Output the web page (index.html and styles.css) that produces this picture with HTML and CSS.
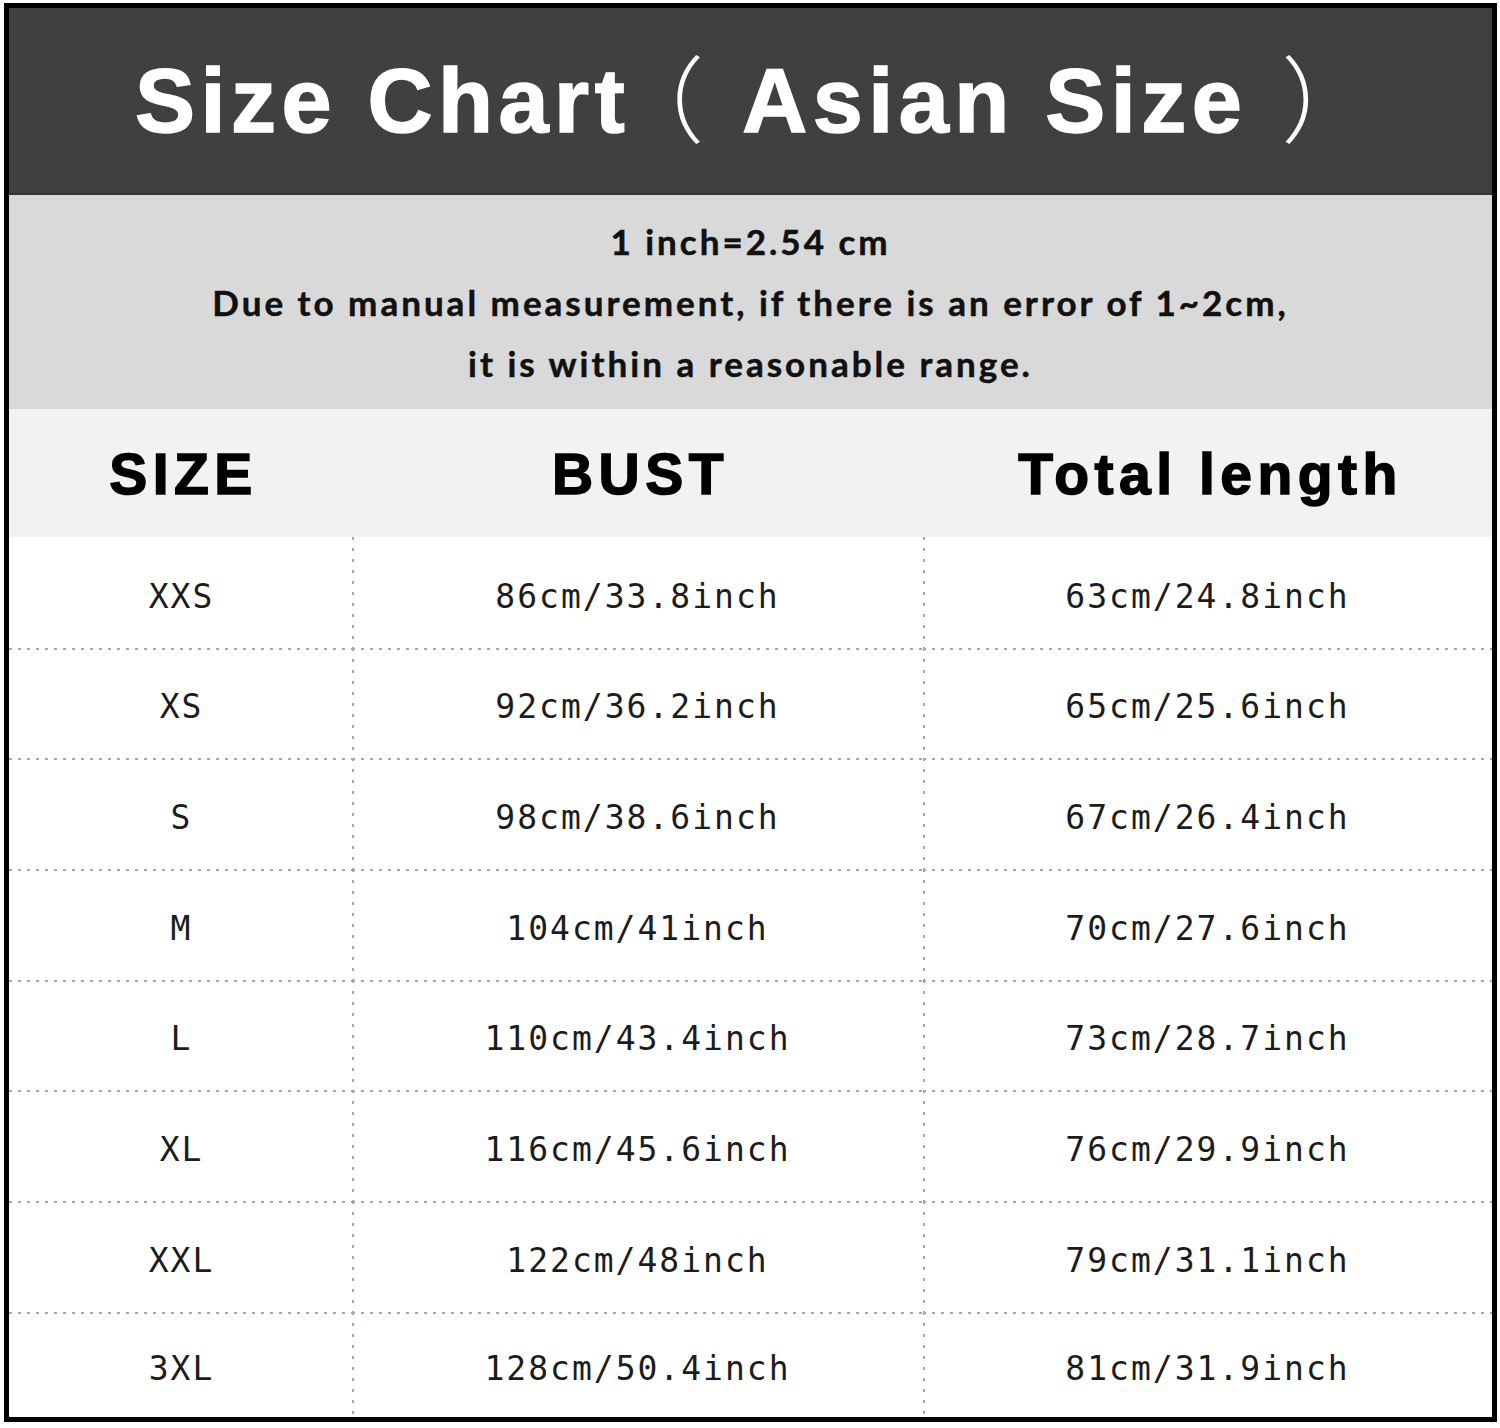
FILE: index.html
```html
<!DOCTYPE html>
<html>
<head>
<meta charset="utf-8">
<link rel="stylesheet" href="styles.css">
</head>
<body>
<div class="frame">
  <div class="title"><span class="t">Size Chart</span><span class="p">（</span><span class="t">Asian Size</span><span class="p pr">）</span></div>
  <div class="note">
    <p>1 inch=2.54 cm</p>
    <p>Due to manual measurement, if there is an error of 1~2cm,</p>
    <p>it is within a reasonable range.</p>
  </div>
  <div class="table">
    <div class="hd">SIZE</div><div class="hd">BUST</div><div class="hd">Total length</div>
    <div class="c c1">XXS</div><div class="c c2">86cm/33.8inch</div><div class="c c3">63cm/24.8inch</div>
    <div class="c c1 r">XS</div><div class="c c2 r">92cm/36.2inch</div><div class="c c3 r">65cm/25.6inch</div>
    <div class="c c1 r">S</div><div class="c c2 r">98cm/38.6inch</div><div class="c c3 r">67cm/26.4inch</div>
    <div class="c c1 r">M</div><div class="c c2 r">104cm/41inch</div><div class="c c3 r">70cm/27.6inch</div>
    <div class="c c1 r">L</div><div class="c c2 r">110cm/43.4inch</div><div class="c c3 r">73cm/28.7inch</div>
    <div class="c c1 r">XL</div><div class="c c2 r">116cm/45.6inch</div><div class="c c3 r">76cm/29.9inch</div>
    <div class="c c1 r">XXL</div><div class="c c2 r">122cm/48inch</div><div class="c c3 r">79cm/31.1inch</div>
    <div class="c c1 r">3XL</div><div class="c c2 r">128cm/50.4inch</div><div class="c c3 r">81cm/31.9inch</div>
  </div>
</div>
</body>
</html>
```

FILE: styles.css
```css
* { box-sizing: border-box; }
html, body { margin: 0; padding: 0; background: #ffffff; }
body { width: 1500px; height: 1428px; overflow: hidden; }

.frame {
  margin: 3px 0 0 4px;
  width: 1493px;
  height: 1419px;
  border: 5px solid #000;
  background: #fff;
  display: flex;
  flex-direction: column;
  overflow: hidden;
}

.title {
  height: 187px;
  background: #404040;
  border-bottom: 2px solid #353535;
  display: flex;
  align-items: center;
  justify-content: flex-start;
  padding-left: 126px;
  color: #fff;
  font-family: "Liberation Sans", Arial, sans-serif;
  font-weight: 700;
  font-size: 90px;
  line-height: 1;
}
.title .t {
  letter-spacing: 5.5px;
  -webkit-text-stroke: 1.5px #fff;
}
.title .p {
  font-family: "Noto Sans CJK SC", sans-serif;
  font-feature-settings: "halt" 1;
  font-weight: 300;
  font-size: 94px;
  margin: 0 38px 12px 27px;
}
.title .pr { margin: 0 0 12px 34px; }

.note {
  height: 214px;
  background: #d9d9d9;
  display: flex;
  flex-direction: column;
  justify-content: center;
  align-items: center;
  font-family: Lato, "Open Sans", sans-serif;
  font-weight: 700;
  font-size: 35px;
  letter-spacing: 3px;
  color: #111;
}
.note p {
  margin: 0;
  line-height: 61px;
  -webkit-text-stroke: 0.5px #111;
}

.table {
  flex: 1;
  display: grid;
  grid-template-columns: 343px 571px 1fr;
  grid-template-rows: 128px repeat(7, 110.67px) 1fr;
}

.hd {
  background: #f2f2f2;
  display: flex;
  align-items: center;
  justify-content: center;
  font-family: "Liberation Sans", Arial, sans-serif;
  font-weight: 700;
  font-size: 57px;
  letter-spacing: 5.5px;
  -webkit-text-stroke: 1.5px #000;
  color: #000;
  padding: 2px 0 0 6px;
}

.c {
  display: flex;
  align-items: center;
  justify-content: center;
  padding-top: 8px;
  font-family: "DejaVu Sans Mono", monospace;
  font-size: 33px;
  letter-spacing: 2px;
  color: #1c1c1c;
  background-repeat: no-repeat;
}
.c1 { padding-left: 2px; }
.c2, .c3 {
  background-image: linear-gradient(to bottom, #a9a99a 3px, transparent 3px);
  background-size: 2px 11px;
  background-position: 0 0;
  background-repeat: repeat-y;
}
.r.c1 {
  background-image: linear-gradient(to right, #a9a99a 3px, transparent 3px);
  background-size: 9px 2px;
  background-position: 0 0;
  background-repeat: repeat-x;
}
.r.c2, .r.c3 {
  background-image:
    linear-gradient(to right, #a9a99a 3px, transparent 3px),
    linear-gradient(to bottom, #a9a99a 3px, transparent 3px);
  background-size: 9px 2px, 2px 11px;
  background-position: 0 0, 0 0;
  background-repeat: repeat-x, repeat-y;
}
```
